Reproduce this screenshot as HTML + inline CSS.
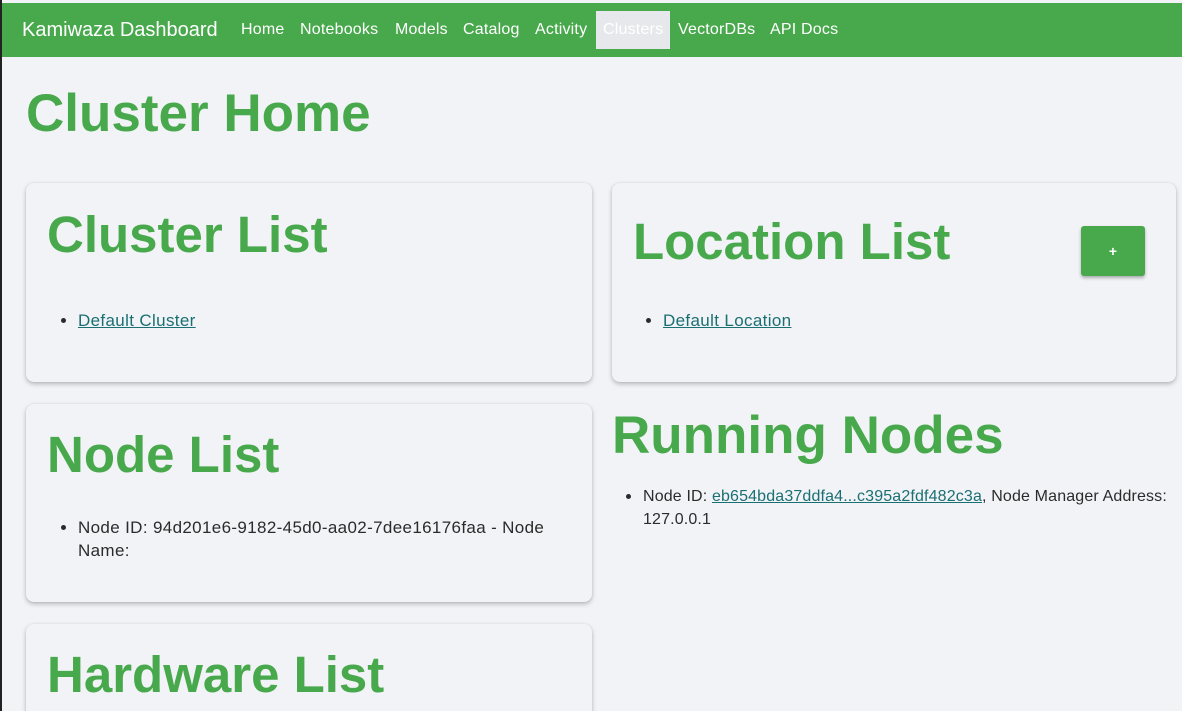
<!DOCTYPE html>
<html><head><meta charset="utf-8"><style>
*{margin:0;padding:0;box-sizing:border-box}
html,body{width:1182px;height:711px;overflow:hidden}
body{background:#f2f3f7;font-family:"Liberation Sans",sans-serif;color:#2b2b2b;position:relative}
.lb{position:absolute;left:0;top:0;width:2px;height:711px;background:#222}
nav{position:absolute;left:2px;top:3px;width:1180px;height:54px;background:#48a84c;color:#fff}
nav span{position:absolute;top:0;line-height:54px;font-size:16px;letter-spacing:0.2px}
.brand{font-size:20px!important;letter-spacing:0!important}
.act{background:#e6e8ec;color:#fff;top:8px!important;height:38px;line-height:38px!important;padding:0 7px}
.h{position:absolute;font-weight:bold;color:#48a84c;font-size:51px;line-height:1;white-space:nowrap}
.card{position:absolute;background:#f2f3f7;border-radius:8px;box-shadow:0 2px 5px rgba(0,0,0,.25),0 0 2px rgba(0,0,0,.06)}
.t{position:absolute;font-size:17px;letter-spacing:0.35px;line-height:23px}
.t a{color:#1a6f73;text-decoration:underline}
.b{position:absolute;width:5px;height:5px;border-radius:50%;background:#2b2b2b}
.btn{position:absolute;left:1081px;top:226px;width:64px;height:50px;background:#48a84c;border-radius:3px;box-shadow:0 2px 3px rgba(0,0,0,.3);color:#fff;font-size:14px;text-align:center;line-height:50px;font-weight:bold}
</style></head><body>
<div class="lb"></div>
<nav>
<span class="brand" style="left:20px">Kamiwaza Dashboard</span>
<span style="left:239px">Home</span>
<span style="left:298px">Notebooks</span>
<span style="left:393px">Models</span>
<span style="left:461px">Catalog</span>
<span style="left:533px">Activity</span>
<span class="act" style="left:594px">Clusters</span>
<span style="left:676px">VectorDBs</span>
<span style="left:768px">API Docs</span>
</nav>
<div class="h" style="left:26px;top:87px;font-size:53px">Cluster Home</div>
<div class="card" style="left:26px;top:183px;width:566px;height:199px"></div>
<div class="card" style="left:612px;top:183px;width:564px;height:199px"></div>
<div class="card" style="left:26px;top:404px;width:566px;height:198px"></div>
<div class="card" style="left:26px;top:624px;width:566px;height:120px"></div>
<div class="h" style="left:47px;top:209px">Cluster List</div>
<div class="b" style="left:61px;top:318px"></div>
<div class="t" style="left:78px;top:309px"><a>Default Cluster</a></div>
<div class="h" style="left:633px;top:216px">Location List</div>
<div class="btn">+</div>
<div class="b" style="left:646px;top:318px"></div>
<div class="t" style="left:663px;top:309px"><a>Default Location</a></div>
<div class="h" style="left:47px;top:429px">Node List</div>
<div class="b" style="left:61px;top:525px"></div>
<div class="t" style="left:78px;top:516px;width:510px">Node ID: 94d201e6-9182-45d0-aa02-7dee16176faa - Node<br>Name:</div>
<div class="h" style="left:47px;top:649px">Hardware List</div>
<div class="h" style="left:612px;top:409px;font-size:53px">Running Nodes</div>
<div class="b" style="left:626px;top:494px"></div>
<div class="t" style="left:643px;top:485px;width:540px;white-space:nowrap;font-size:16px;letter-spacing:0.15px">Node ID: <a>eb654bda37ddfa4...c395a2fdf482c3a</a>, Node Manager Address:<br>127.0.0.1</div>
</body></html>
